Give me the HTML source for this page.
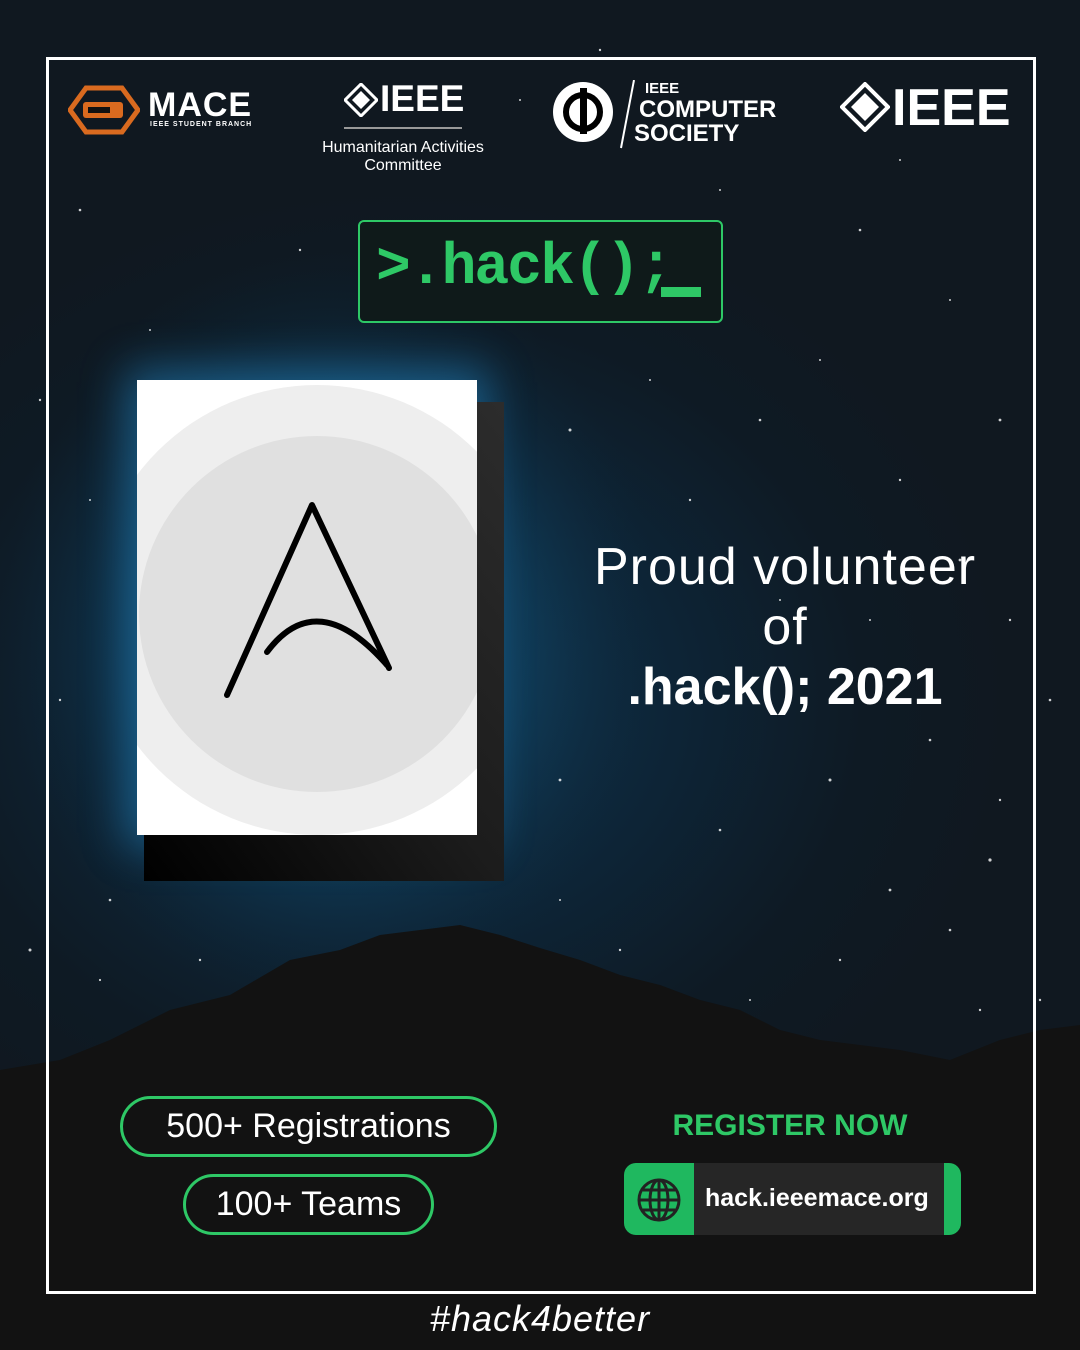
<!DOCTYPE html>
<html><head><meta charset="utf-8"><style>
*{margin:0;padding:0;box-sizing:border-box}
body{width:1080px;height:1350px;overflow:hidden;position:relative;font-family:"Liberation Sans",sans-serif;
background:radial-gradient(ellipse 620px 520px at 400px 700px,#0f3550 0%,#0d2436 45%,#0e1a24 75%,#101820 100%);}
.abs{position:absolute}
.frame{position:absolute;left:46px;top:57px;width:990px;height:1237px;border:3px solid #fff}
.t{position:absolute;color:#fff;white-space:nowrap}
.pill{position:absolute;border:3px solid #2ec866;border-radius:32px;color:#fff;font-size:34px;display:flex;align-items:center;justify-content:center}
</style></head><body>
<svg class="abs" style="left:0;top:0" width="1080" height="1350">
<defs><radialGradient id="gl" cx="50%" cy="50%" r="50%"><stop offset="0" stop-color="#1a6d9c" stop-opacity=".8"/><stop offset=".6" stop-color="#124d70" stop-opacity=".4"/><stop offset="1" stop-color="#0e2a3d" stop-opacity="0"/></radialGradient>
<linearGradient id="sh" x1="0" y1="1" x2="1" y2="0"><stop offset="0" stop-color="#000"/><stop offset=".5" stop-color="#1c1c1c"/><stop offset="1" stop-color="#2c2c2c"/></linearGradient></defs>
<ellipse cx="330" cy="630" rx="330" ry="380" fill="url(#gl)"/>
<g fill="#fff" opacity=".8">
<circle cx="80" cy="210" r="1.3"/><circle cx="150" cy="330" r="1"/><circle cx="300" cy="250" r="1.2"/><circle cx="520" cy="100" r="1"/><circle cx="600" cy="50" r="1.2"/><circle cx="720" cy="190" r="1"/><circle cx="860" cy="230" r="1.3"/><circle cx="950" cy="300" r="1"/><circle cx="1000" cy="420" r="1.4"/><circle cx="900" cy="480" r="1.2"/><circle cx="820" cy="360" r="1"/><circle cx="760" cy="420" r="1.3"/><circle cx="650" cy="380" r="1"/><circle cx="570" cy="430" r="1.5"/><circle cx="690" cy="500" r="1.2"/><circle cx="960" cy="560" r="1.4"/><circle cx="1010" cy="620" r="1.2"/><circle cx="870" cy="620" r="1"/><circle cx="930" cy="740" r="1.3"/><circle cx="830" cy="780" r="1.5"/><circle cx="720" cy="830" r="1.3"/><circle cx="1000" cy="800" r="1.2"/><circle cx="990" cy="860" r="1.6"/><circle cx="890" cy="890" r="1.4"/><circle cx="950" cy="930" r="1.3"/><circle cx="840" cy="960" r="1.2"/><circle cx="560" cy="900" r="1"/><circle cx="620" cy="950" r="1.2"/><circle cx="110" cy="900" r="1.3"/><circle cx="30" cy="950" r="1.5"/><circle cx="100" cy="980" r="1.1"/><circle cx="200" cy="960" r="1.2"/><circle cx="60" cy="700" r="1.2"/><circle cx="90" cy="500" r="1"/><circle cx="40" cy="400" r="1.2"/><circle cx="560" cy="780" r="1.4"/><circle cx="660" cy="690" r="1.2"/><circle cx="780" cy="600" r="1"/><circle cx="900" cy="160" r="1"/><circle cx="1050" cy="700" r="1.3"/><circle cx="1040" cy="1000" r="1.2"/><circle cx="980" cy="1010" r="1.2"/><circle cx="750" cy="1000" r="1"/></g>
<path d="M0 1070 L60 1060 L110 1040 L170 1010 L230 995 L290 960 L340 950 L380 935 L420 930 L460 925 L500 935 L540 948 L580 960 L620 975 L660 985 L700 1000 L740 1010 L780 1030 L820 1040 L860 1045 L900 1050 L950 1060 L1000 1040 L1040 1030 L1080 1025 L1080 1350 L0 1350Z" fill="#121212"/>
</svg>
<div class="frame"></div>
<svg class="abs" style="left:68px;top:85px" width="72" height="50"><path d="M18 3 L54 3 L70 25 L54 47 L18 47 L2 25Z" fill="none" stroke="#d96a1f" stroke-width="5"/><rect x="15" y="17" width="40" height="16" rx="3" fill="#d96a1f"/><rect x="20" y="22" width="22" height="6" fill="#111"/></svg>
<div class="t" style="left:148px;top:86px;font-size:34px;font-weight:bold;letter-spacing:1px">MACE</div>
<div class="t" style="left:150px;top:121px;font-size:7px;font-weight:bold;letter-spacing:1px">IEEE STUDENT BRANCH</div>
<svg class="abs" style="left:344px;top:83px" width="34" height="34"><path d="M17 1 L33 17 L17 33 L1 17Z" fill="none" stroke="#fff" stroke-width="3"/><path d="M17 8 L26 17 L17 26 L8 17Z" fill="#fff"/></svg>
<div class="t" style="left:380px;top:78px;font-size:37px;font-weight:bold">IEEE</div>
<div class="abs" style="left:344px;top:127px;width:118px;height:2px;background:#999"></div>
<div class="t" style="left:317px;top:139px;font-size:16px;width:172px;text-align:center;line-height:18px">Humanitarian Activities<br>Committee</div>
<svg class="abs" style="left:551px;top:80px" width="90" height="70"><circle cx="32" cy="32" r="30" fill="#fff"/><circle cx="32" cy="32" r="17" fill="none" stroke="#000" stroke-width="6"/><rect x="29" y="8" width="7" height="46" fill="#000"/><path d="M83 0 L70 68" stroke="#fff" stroke-width="2"/></svg>
<div class="t" style="left:645px;top:80px;font-size:15px;font-weight:bold">IEEE</div>
<div class="t" style="left:639px;top:96px;font-size:24px;font-weight:bold">COMPUTER</div>
<div class="t" style="left:634px;top:120px;font-size:24px;font-weight:bold">SOCIETY</div>
<svg class="abs" style="left:840px;top:82px" width="50" height="50"><path d="M25 2 L48 25 L25 48 L2 25Z" fill="none" stroke="#fff" stroke-width="4"/><path d="M25 11 L39 25 L25 39 L11 25Z" fill="#fff"/></svg>
<div class="t" style="left:892px;top:78px;font-size:52px;font-weight:bold">IEEE</div>
<div class="abs" style="left:358px;top:220px;width:365px;height:103px;border:2px solid #2ec866;border-radius:6px;background:#0f1a1a"></div>
<div class="t" style="left:376px;top:236px;font-family:'Liberation Mono',monospace;font-size:58px;color:#2ec866;font-weight:bold;letter-spacing:-2px">&gt;.hack();</div>
<div class="abs" style="left:661px;top:287px;width:40px;height:10px;background:#2ec866"></div>
<div class="abs" style="left:137px;top:380px;width:340px;height:455px;box-shadow:0 0 40px 12px rgba(40,150,220,.45)"></div>
<svg class="abs" style="left:137px;top:380px" width="370" height="505">
<rect x="7" y="22" width="360" height="479" fill="url(#sh)"/>
<rect x="0" y="0" width="340" height="455" fill="#fff"/>
<clipPath id="c"><rect x="0" y="0" width="340" height="455"/></clipPath>
<g clip-path="url(#c)"><circle cx="180" cy="230" r="225" fill="#eeeeee"/><circle cx="180" cy="234" r="178" fill="#e0e0e0"/></g>
<path d="M90 315 L175 125 L252 288" fill="none" stroke="#000" stroke-width="6" stroke-linecap="round" stroke-linejoin="round"/>
<path d="M130 272 Q180 205 250 285" fill="none" stroke="#000" stroke-width="6" stroke-linecap="round"/>
</svg>
<div class="t" style="left:560px;top:537px;width:450px;text-align:center;font-size:52px;line-height:60px;letter-spacing:1px">Proud volunteer<br>of<br><b style="letter-spacing:0">.hack(); 2021</b></div>
<div class="pill" style="left:120px;top:1096px;width:377px;height:61px">500+ Registrations</div>
<div class="pill" style="left:183px;top:1174px;width:251px;height:61px">100+ Teams</div>
<div class="t" style="left:625px;top:1109px;width:330px;text-align:center;font-size:30px;font-weight:bold;color:#2ec866">REGISTER NOW</div>
<div class="abs" style="left:624px;top:1163px;width:337px;height:72px;border-radius:12px;background:#1fb85f"></div>
<div class="abs" style="left:694px;top:1163px;width:250px;height:72px;background:#262626"></div>
<svg class="abs" style="left:636px;top:1177px" width="46" height="46" fill="none" stroke="#222" stroke-width="3"><circle cx="23" cy="23" r="20"/><ellipse cx="23" cy="23" rx="9" ry="20"/><path d="M23 3 V43 M3 23 H43 M7 13 H39 M7 33 H39"/></svg>
<div class="t" style="left:705px;top:1184px;font-size:25px;font-weight:bold">hack.ieeemace.org</div>
<div class="t" style="left:405px;top:1298px;width:270px;text-align:center;font-size:36px;font-style:italic;letter-spacing:1px">#hack4better</div>
</body></html>
